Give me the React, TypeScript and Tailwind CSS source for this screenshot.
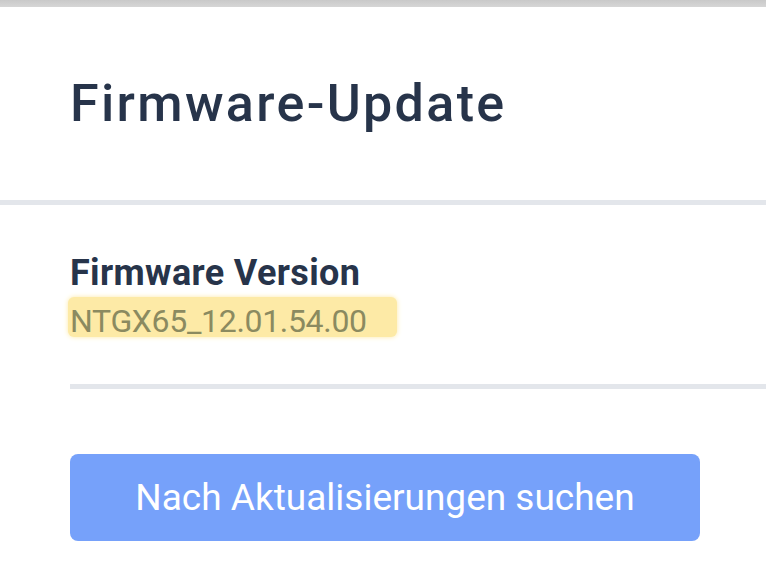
export default function App() {
  return (
    <div className="w-[766px] h-[574px] overflow-hidden bg-white font-['Roboto',sans-serif]">
      <div className="h-[7px] bg-gradient-to-b from-[#c9c9c9] to-[#d6d6d6]" />
      <div className="h-[193px] flex items-center pl-[70px]">
        <h1 className="text-[52px] leading-none font-medium tracking-[0.045em] text-[#27344a]">
          Firmware-Update
        </h1>
      </div>
      <div className="h-[5px] bg-[#e3e6eb]" />
      <div className="pl-[70px]">
        <div className="pt-[48px]">
          <h2 className="text-[36px] leading-[40px] font-bold tracking-[0.01em] text-[#27344a]">
            Firmware Version
          </h2>
          <div className="mt-[4px] -ml-[2px] inline-block h-[40px] rounded-[6px] bg-[#fdeaa6] pl-[2px] pr-[30px] shadow-[0_0_5px_#fdeaa6]">
            <span className="text-[32px] leading-[49px] tracking-[-0.01em] text-[#8b8a60]">NTGX65_12.01.54.00</span>
          </div>
        </div>
        <div className="mt-[45px] h-[5px] bg-[#e3e6eb]" />
        <button className="mt-[65px] w-[630px] h-[87px] rounded-[8px] bg-[#76a1fa] text-white text-[37px] font-normal">
          Nach Aktualisierungen suchen
        </button>
      </div>
    </div>
  );
}
